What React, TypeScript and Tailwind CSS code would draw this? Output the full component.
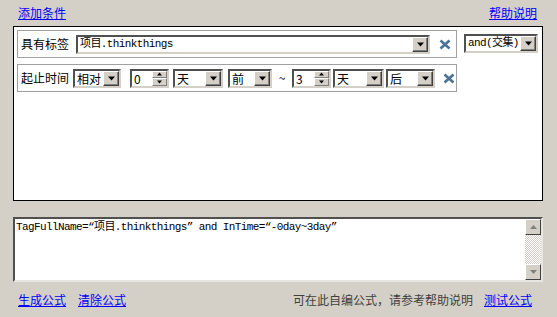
import React from 'react';

const cjk = "font-['Noto_Sans_CJK_SC','Noto_Sans',sans-serif]";
const mono = "font-['Liberation_Mono','Noto_Sans_CJK_SC',monospace]";

const Arrow: React.FC<{ up?: boolean; size?: number }> = ({ up, size = 7 }) => (
  <svg width={size} height={Math.ceil(size / 2) + 1} viewBox="0 0 7 4" className={up ? 'rotate-180' : ''}>
    <path d="M0 0h7L3.5 4z" fill="#000" />
  </svg>
);

const DropButton: React.FC = () => (
  <div className="w-[16px] h-full shrink-0 bg-[#d4d0c8] border border-t-white border-l-white border-b-[#404040] border-r-[#404040] flex items-center justify-center shadow-[inset_-1px_-1px_0_#808080]">
    <Arrow />
  </div>
);

const Select: React.FC<{ value: string; w: string; monoText?: boolean; className?: string }> = ({ value, w, monoText, className }) => (
  <div
    className={`${w} h-[19px] flex bg-white border-2 border-t-[#505050] border-l-[#505050] border-b-[#d4d0c8] border-r-[#d4d0c8] ${className ?? ''}`}
  >
    <span
      className={`flex-1 pl-[2px] leading-[15px] text-black whitespace-nowrap overflow-hidden ${
        monoText ? `${mono} text-[11px] tracking-[-0.6px]` : `${cjk} text-[12px]`
      }`}
    >
      {value}
    </span>
    <DropButton />
  </div>
);

const Spinner: React.FC<{ value: string; className?: string }> = ({ value, className }) => (
  <div
    className={`w-[39px] h-[19px] flex bg-white border-2 border-t-[#505050] border-l-[#505050] border-b-[#d4d0c8] border-r-[#d4d0c8] ${className ?? ''}`}
  >
    <span className={`flex-1 pl-[2px] leading-[15px] text-[12px] ${cjk}`}>{value}</span>
    <div className="w-[15px] h-full flex flex-col">
      <div className="flex-1 bg-[#d4d0c8] border border-t-white border-l-white border-b-[#808080] border-r-[#808080] flex items-center justify-center">
        <Arrow up size={5} />
      </div>
      <div className="flex-1 bg-[#d4d0c8] border border-t-white border-l-white border-b-[#808080] border-r-[#808080] flex items-center justify-center">
        <Arrow size={5} />
      </div>
    </div>
  </div>
);

const Remove: React.FC<{ className?: string }> = ({ className }) => (
  <svg width="12" height="11" viewBox="0 0 12 11" className={className}>
    <path d="M1.5 1.5L10.5 9.5M10.5 1.5L1.5 9.5" stroke="#4a7298" strokeWidth="2.6" strokeLinecap="butt" />
  </svg>
);

const Link: React.FC<{ children: React.ReactNode; className?: string }> = ({ children, className }) => (
  <a href="#" className={`text-[#0000ff] underline text-[12px] ${cjk} ${className ?? ''}`}>
    {children}
  </a>
);

export default function App() {
  return (
    <div className={`w-[557px] h-[317px] bg-[#d4d0c8] overflow-hidden ${cjk}`}>
      {/* top links */}
      <div className="h-[26px] flex items-start justify-between pl-[18px] pr-[20px] pt-[4px]">
        <Link>添加条件</Link>
        <Link>帮助说明</Link>
      </div>

      {/* condition panel */}
      <div className="ml-[13px] w-[530px] h-[175px] bg-white border border-black pl-[3px] pt-[3px]">
        <div className="flex items-start">
          <div className="w-[440px] h-[28px] border border-[#a0a0a0] flex items-center pl-[3px]">
            <span className="text-[12px] text-black w-[47px] whitespace-nowrap">具有标签</span>
            <Select value="项目.thinkthings" w="w-[354px]" monoText className="ml-[8px]" />
            <Remove className="ml-[9px]" />
          </div>
          <Select value="and(交集)" w="w-[74px]" monoText className="ml-[7px] mt-[4px]" />
        </div>

        <div className="w-[440px] h-[28px] mt-[6px] border border-[#a0a0a0] flex items-center pl-[3px]">
          <span className="text-[12px] text-black w-[47px] whitespace-nowrap">起止时间</span>
          <Select value="相对" w="w-[48px]" className="ml-[5px]" />
          <Spinner value="0" className="ml-[9px]" />
          <Select value="天" w="w-[50px]" className="ml-[4px]" />
          <Select value="前" w="w-[44px]" className="ml-[5px]" />
          <span className="w-[20px] text-center text-[12px] text-black">~</span>
          <Spinner value="3" />
          <Select value="天" w="w-[51px]" className="ml-[2px]" />
          <Select value="后" w="w-[49px]" className="ml-[2px]" />
          <Remove className="ml-[8px]" />
        </div>
      </div>

      {/* formula textarea */}
      <div className="ml-[13px] mt-[16px] w-[530px] h-[65px] flex bg-white border-2 border-t-[#505050] border-l-[#505050] border-b-[#e8e6e0] border-r-[#e8e6e0]">
        <div className={`flex-1 pl-[1px] pt-[1px] text-[11px] tracking-[-0.6px] leading-[14px] text-black whitespace-nowrap ${mono}`}>
          TagFullName=“项目.thinkthings” and InTime=“-0day~3day”
        </div>
        <div className="w-[16px] h-full flex flex-col bg-[repeating-conic-gradient(#d4d0c8_0_25%,#ffffff_0_50%)] bg-[length:2px_2px]">
          <div className="h-[16px] bg-[#d4d0c8] border border-t-white border-l-white border-b-[#404040] border-r-[#404040] flex items-center justify-center">
            <svg width="7" height="4" viewBox="0 0 7 4"><path d="M0 4h7L3.5 0z" fill="#808080" /></svg>
          </div>
          <div className="flex-1" />
          <div className="h-[16px] bg-[#d4d0c8] border border-t-white border-l-white border-b-[#404040] border-r-[#404040] flex items-center justify-center">
            <svg width="7" height="4" viewBox="0 0 7 4"><path d="M0 0h7L3.5 4z" fill="#808080" /></svg>
          </div>
        </div>
      </div>

      {/* bottom actions */}
      <div className="mt-[9px] flex items-center pl-[18px] pr-[25px]">
        <Link>生成公式</Link>
        <Link className="ml-[12px]">清除公式</Link>
        <span className="ml-auto text-[12px] text-[#404040]">可在此自编公式，请参考帮助说明</span>
        <Link className="ml-[11px]">测试公式</Link>
      </div>
    </div>
  );
}
